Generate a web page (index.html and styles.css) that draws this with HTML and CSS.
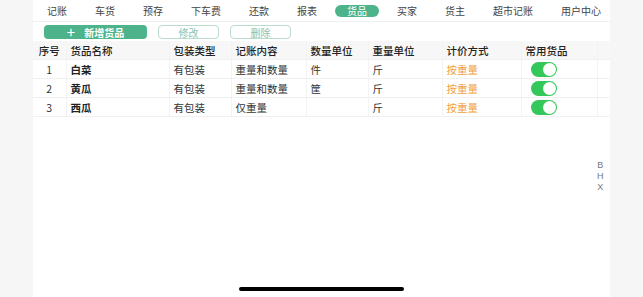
FILE: index.html
```html
<!doctype html>
<html lang="zh">
  <head>
    <meta charset="utf-8" />
    <title>货品</title>
    <link rel="stylesheet" href="styles.css">
  </head>
  <body>
    <div class="page">
      <div class="side_left"></div>
      <div class="main">
        <div class="nav">
          <div class="nav_item">记账</div>
          <div class="nav_item">车货</div>
          <div class="nav_item">预存</div>
          <div class="nav_item">下车费</div>
          <div class="nav_item">还款</div>
          <div class="nav_item">报表</div>
          <div class="nav_item active">货品</div>
          <div class="nav_item">买家</div>
          <div class="nav_item">货主</div>
          <div class="nav_item">超市记账</div>
          <div class="nav_item">用户中心</div>
        </div>
        <div class="toolbar">
          <div class="btn btn_add"><span class="plus">+</span>新增货品</div>
          <div class="btn btn_line">修改</div>
          <div class="btn btn_line">删除</div>
        </div>
        <table class="goods">
          <colgroup>
            <col class="c_no" />
            <col class="c_name" />
            <col class="c_pack" />
            <col class="c_rec" />
            <col class="c_qty" />
            <col class="c_wt" />
            <col class="c_price" />
            <col class="c_fav" />
            <col class="c_end" />
          </colgroup>
          <tr class="head">
            <th class="no">序号</th>
            <th>货品名称</th>
            <th>包装类型</th>
            <th>记账内容</th>
            <th>数量单位</th>
            <th>重量单位</th>
            <th>计价方式</th>
            <th>常用货品</th>
            <th></th>
          </tr>
          <tr>
            <td class="no">1</td>
            <td class="name">白菜</td>
            <td>有包装</td>
            <td>重量和数量</td>
            <td>件</td>
            <td>斤</td>
            <td class="price">按重量</td>
            <td><div class="switch"><div class="knob"></div></div></td>
            <td></td>
          </tr>
          <tr>
            <td class="no">2</td>
            <td class="name">黄瓜</td>
            <td>有包装</td>
            <td>重量和数量</td>
            <td>筐</td>
            <td>斤</td>
            <td class="price">按重量</td>
            <td><div class="switch"><div class="knob"></div></div></td>
            <td></td>
          </tr>
          <tr>
            <td class="no">3</td>
            <td class="name">西瓜</td>
            <td>有包装</td>
            <td>仅重量</td>
            <td></td>
            <td>斤</td>
            <td class="price">按重量</td>
            <td><div class="switch"><div class="knob"></div></div></td>
            <td></td>
          </tr>
        </table>
        <div class="letters">
          <div>B</div>
          <div>H</div>
          <div>X</div>
        </div>
      </div>
      <div class="side_right"></div>
    </div>
    <div class="home_bar"></div>
  </body>
</html>
```

FILE: styles.css
```css
body {
  margin: 0;
  background-color: #f6f6f6;
  font-family: "Noto Sans CJK SC", "Noto Sans", sans-serif;
  color: #333;
}

.page {
  display: flex;
  height: 297px;
}

.side_left {
  width: 33px;
}

.main {
  position: relative;
  width: 577px;
  background-color: #fff;
}

.side_right {
  flex: 1;
}

.nav {
  display: flex;
  align-items: center;
  gap: 28px;
  height: 21px;
  padding-left: 14px;
  border-bottom: 1px solid #f0f0f0;
  font-size: 10px;
  color: #444;
}

.nav_item {
  line-height: 12px;
}

.nav_item.active {
  background-color: #4db38b;
  color: #fff;
  border-radius: 7px;
  padding: 0 12px;
  margin: 0 -10px;
}

.toolbar {
  display: flex;
  gap: 11px;
  padding: 3px 0 0 11px;
  height: 16px;
}

.btn {
  display: flex;
  justify-content: center;
  align-items: center;
  height: 14px;
  font-size: 10px;
  border-radius: 4px;
  box-sizing: border-box;
}

.btn_add {
  width: 103px;
  background-color: #4db38b;
  color: #fff;
  font-weight: bold;
}

.plus {
  font-size: 15px;
  font-weight: normal;
  margin-right: 9px;
  line-height: 14px;
}

.btn_line {
  width: 61px;
  border: 1px solid #b9dccd;
  color: #8cc2ab;
}

.goods {
  border-collapse: collapse;
  table-layout: fixed;
  width: 577px;
  font-size: 10.5px;
}

.c_no { width: 33px; }
.c_name { width: 103px; }
.c_pack { width: 62px; }
.c_rec { width: 75px; }
.c_qty { width: 62px; }
.c_wt { width: 74px; }
.c_price { width: 79px; }
.c_fav { width: 76px; }
.c_end { width: 13px; }

.goods th,
.goods td {
  height: 18px;
  padding: 0 0 0 4px;
  text-align: left;
  border-bottom: 1px solid #f0f0f0;
  border-left: 1px solid #f3f3f3;
  white-space: nowrap;
  overflow: hidden;
}

.goods th {
  background-color: #f7f7f7;
  font-weight: 500;
  color: #222;
}

.goods .no {
  border-left: none;
  text-align: center;
  padding: 0;
}

.goods td.name {
  font-weight: bold;
  color: #222;
}

.goods td.price {
  color: #f2a03d;
}

.switch {
  width: 26px;
  height: 15px;
  margin-left: 5px;
  border-radius: 8px;
  background-color: #34c759;
  display: flex;
  justify-content: flex-end;
  align-items: center;
  padding-right: 1px;
  box-sizing: border-box;
}

.knob {
  width: 13px;
  height: 13px;
  border-radius: 50%;
  background-color: #fff;
}

.letters {
  position: absolute;
  left: 564px;
  top: 160px;
  font-family: "Liberation Sans", sans-serif;
  font-size: 9px;
  line-height: 11px;
  color: #777;
  text-align: center;
}

.home_bar {
  position: absolute;
  left: 239px;
  top: 287px;
  width: 165px;
  height: 4px;
  border-radius: 2px;
  background-color: #000;
}
```
